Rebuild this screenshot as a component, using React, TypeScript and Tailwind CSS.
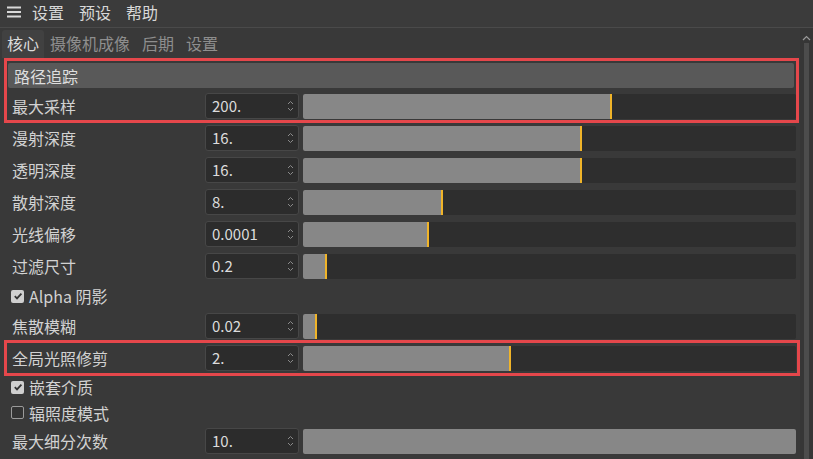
import React from "react";

type Row =
  | { kind: "slider"; label: string; value: string; fill: number }
  | { kind: "check"; label: string; checked: boolean; h: string };

const FONT = { fontFamily: '"Noto Sans CJK SC", "Noto Sans", sans-serif' };

function Spinner() {
  return (
    <svg width="7" height="14" viewBox="0 0 7 14" className="shrink-0">
      <path d="M1 5 L3.5 2.5 L6 5" fill="none" stroke="#8a8a8a" strokeWidth="1" />
      <path d="M1 9 L3.5 11.5 L6 9" fill="none" stroke="#8a8a8a" strokeWidth="1" />
    </svg>
  );
}

function SliderRow({ label, value, fill }: { label: string; value: string; fill: number }) {
  return (
    <div className="flex h-8 items-center pl-[12px] pr-[4px]">
      <div className="w-[193px] shrink-0 text-[16px] text-[#d2d2d2]">{label}</div>
      <div className="flex h-[26px] w-[94px] shrink-0 items-center justify-between rounded-[3px] border border-[#474747] bg-[#2c2c2c] pl-[6px] pr-[4px] text-[15px] text-[#dcdcdc]">
        <span>{value}</span>
        <Spinner />
      </div>
      <div className="ml-[4px] flex h-[25px] flex-1 overflow-hidden rounded-[2px] bg-[#2e2e2e]">
        <div className="h-full bg-[#878787]" style={{ width: `${fill}%` }} />
        {fill < 100 && <div className="h-full w-[2px] bg-[#f0b429]" />}
      </div>
    </div>
  );
}

function CheckRow({ label, checked, h }: { label: string; checked: boolean; h: string }) {
  return (
    <div className={`flex items-center gap-[5px] pl-[11px] ${h}`}>
      {checked ? (
        <div className="flex h-[13px] w-[13px] items-center justify-center rounded-[2px] bg-[#cfcfcf]">
          <svg width="10" height="10" viewBox="0 0 10 10">
            <path d="M1.8 5.2 L4 7.4 L8.4 2.6" fill="none" stroke="#333333" strokeWidth="1.8" />
          </svg>
        </div>
      ) : (
        <div className="h-[13px] w-[13px] rounded-[2px] border border-[#9a9a9a] bg-[#333333]" />
      )}
      <span className="text-[16px] text-[#d2d2d2]">{label}</span>
    </div>
  );
}

function RedBox({ className }: { className: string }) {
  return <div className={`pointer-events-none absolute border-[3px] border-[#e5474b] ${className}`} />;
}

export default function App() {
  const W = 493;
  const pct = (px: number) => (px / W) * 100;

  const mid: Row[] = [
    { kind: "slider", label: "漫射深度", value: "16.", fill: pct(277) },
    { kind: "slider", label: "透明深度", value: "16.", fill: pct(277) },
    { kind: "slider", label: "散射深度", value: "8.", fill: pct(138) },
    { kind: "slider", label: "光线偏移", value: "0.0001", fill: pct(124) },
    { kind: "slider", label: "过滤尺寸", value: "0.2", fill: pct(22) },
    { kind: "check", label: "Alpha 阴影", checked: true, h: "h-[28px]" },
    { kind: "slider", label: "焦散模糊", value: "0.02", fill: pct(12) },
  ];

  const render = (r: Row) =>
    r.kind === "slider" ? (
      <SliderRow key={r.label} label={r.label} value={r.value} fill={r.fill} />
    ) : (
      <CheckRow key={r.label} label={r.label} checked={r.checked} h={r.h} />
    );

  return (
    <div className="flex h-[459px] w-[813px] flex-col overflow-hidden bg-[#393939]" style={FONT}>
      {/* menu bar */}
      <div className="flex h-[28px] shrink-0 items-center gap-[15px] border-b border-[#4a4a4a] bg-[#3b3b3b] pb-[4px] pl-[7px] text-[16px] text-[#d8d8d8]">
        <svg width="14" height="12" viewBox="0 0 14 12" className="-mr-[4px]">
          <rect x="0" y="0.5" width="14" height="2" fill="#d8d8d8" />
          <rect x="0" y="5" width="14" height="2" fill="#d8d8d8" />
          <rect x="0" y="9.5" width="14" height="2" fill="#d8d8d8" />
        </svg>
        <span>设置</span>
        <span>预设</span>
        <span>帮助</span>
      </div>

      <div className="flex flex-1">
        <div className="flex flex-1 flex-col">
          {/* tabs */}
          <div className="flex h-[30px] shrink-0 items-end pl-[2px] text-[16px]">
            <div className="flex h-[28px] items-center rounded-t-[3px] bg-[#414141] px-[5px] pb-[3px] text-[#dcdcdc]">核心</div>
            <div className="flex h-[28px] items-center gap-[12px] pb-[3px] pl-[6px] text-[#8e8e8e]">
              <span>摄像机成像</span>
              <span>后期</span>
              <span>设置</span>
            </div>
          </div>

          <div className="flex flex-col">
            <div className="relative mt-[5px]">
              <RedBox className="-top-[5px] -bottom-[1px] left-[4px] right-[1px]" />
              <div className="ml-[8px] mr-[6px] flex h-[25px] items-center rounded-[2px] bg-[#595959] pl-[6px] text-[16px] text-[#dedede]">
                路径追踪
              </div>
              <div className="mt-[2px]">
                <SliderRow label="最大采样" value="200." fill={pct(307)} />
              </div>
            </div>

            {mid.map(render)}

            <div className="relative">
              <RedBox className="-top-[2px] -bottom-[2px] left-[4px] right-0" />
              <SliderRow label="全局光照修剪" value="2." fill={pct(206)} />
            </div>

            <CheckRow label="嵌套介质" checked={true} h="h-[26px]" />
            <CheckRow label="辐照度模式" checked={false} h="h-[25px]" />
            <SliderRow label="最大细分次数" value="10." fill={100} />
          </div>
        </div>

        {/* scrollbar */}
        <div className="flex w-[13px] shrink-0 flex-col items-center bg-[#363636] pt-[7px]">
          <svg width="9" height="6" viewBox="0 0 9 6">
            <path d="M1 5 L4.5 1.5 L8 5" fill="none" stroke="#9a9a9a" strokeWidth="1.2" />
          </svg>
          <div className="mt-[2px] w-[5px] flex-1 bg-[#4c4c4c]" />
        </div>
      </div>
    </div>
  );
}
